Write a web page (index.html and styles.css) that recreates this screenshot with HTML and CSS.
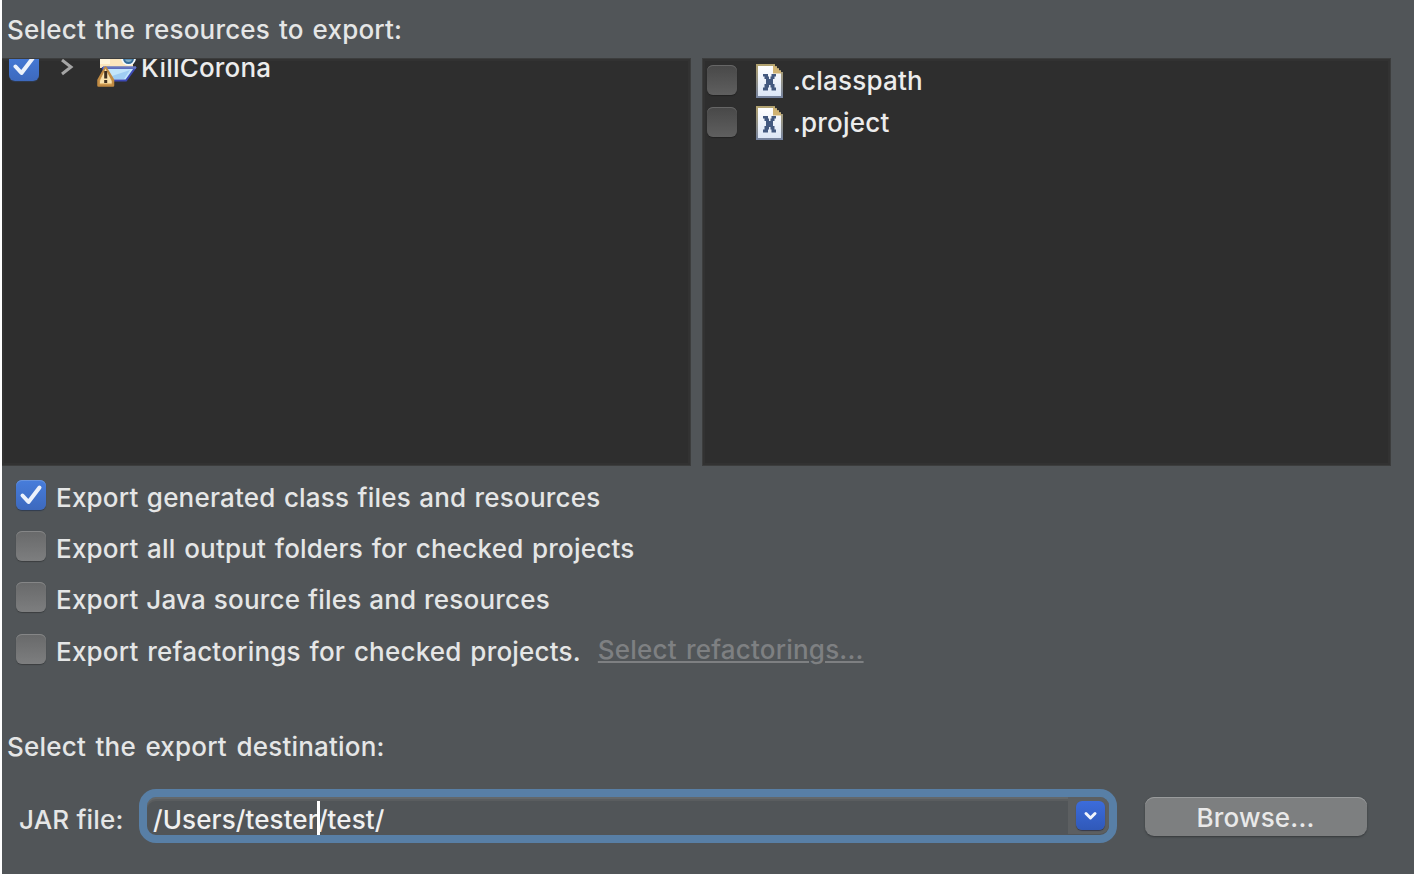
FILE: index.html
```html
<!DOCTYPE html>
<html lang="en">
<head>
<meta charset="utf-8">
<title>JAR Export</title>
<link rel="stylesheet" href="styles.css">
</head>
<body>
<main class="dialog">
  <h1 class="heading"><span class="t-resources">Select the resources to export:</span></h1>
  <section class="panes">
    <div class="pane tree">
      <div class="row tree-row">
        <span class="box checked tree-box"><svg viewBox="0 0 30 30"><path d="M6.5 15.5 12.5 22 23.5 7.5"/></svg></span>
        <svg class="arrow" viewBox="0 0 14 18"><path d="M2 2 11 9 2 16"/></svg>
        <svg class="project" viewBox="0 0 42 42">
          <path d="M4 8H37V21H4z" fill="#fbe6bd"/>
          <path d="M4 8H14V17H4z" fill="#fff4db"/>
          <circle cx="32.5" cy="11" r="7.5" fill="#f4fafc"/>
          <path d="M28 11.500A4.500 4.500 0 0 0 37 11.500z" fill="#7fa9c2" stroke="#326c99" stroke-width="2"/>
          <path d="M7 21H39L30 33.500H10z" fill="#c2e5fb" stroke="#3c49b5" stroke-width="2"/>
          <path d="M16 29 34 23 28 32H16z" fill="#9fcdf3"/>
          <path d="M7 20.500H40" stroke="#6677bf" stroke-width="2.5"/>
          <path d="M9.500 20.500 2.500 33V38.500H17V33z" fill="#eac37f" stroke="#c18b43" stroke-width="2.500" stroke-linejoin="round"/>
          <path d="M9.500 21.500 4 34.500V36H15.500V34.500z" fill="#fae3ae"/>
          <path d="M8.200 24H11.200V31.500H8.200zM8.200 33H11.200V36H8.200z" fill="#3e2f20"/>
        </svg>
        <span class="t-kill">KillCorona</span>
      </div>
    </div>
    <div class="pane files">
      <div class="row">
        <span class="box dark"></span>
        <svg class="file" viewBox="0 0 27 34"><use href="#xml-file"/></svg>
        <span class="t-classpath">.classpath</span>
      </div>
      <div class="row">
        <span class="box dark"></span>
        <svg class="file" viewBox="0 0 27 34"><use href="#xml-file"/></svg>
        <span class="t-project">.project</span>
      </div>
    </div>
  </section>
  <section class="options">
    <label class="option"><span class="box checked"><svg viewBox="0 0 30 30"><path d="M6.5 15.5 12.5 22 23.5 7.5"/></svg></span><span class="option-text t-gen">Export generated class files and resources</span></label>
    <label class="option"><span class="box"></span><span class="option-text t-all">Export all output folders for checked projects</span></label>
    <label class="option"><span class="box"></span><span class="option-text t-java">Export Java source files and resources</span></label>
    <label class="option"><span class="box"></span><span class="option-text t-ref">Export refactorings for checked projects.</span><a class="link">Select refactorings...</a></label>
  </section>
  <h2 class="destination"><span class="t-dest">Select the export destination:</span></h2>
  <section class="jar">
    <span class="jar-label">JAR file:</span>
    <div class="combo">
      <div class="combo-text"><span>/Users/tester</span><i class="caret"></i><span>/test/</span></div>
      <div class="combo-end"><span class="drop"><svg viewBox="0 0 29 29"><path d="M10 12.5 14.5 17 19 12.5"/></svg></span></div>
    </div>
    <button class="browse">Browse...</button>
  </section>
</main>
<svg class="defs" width="0" height="0">
  <defs>
    <linearGradient id="edge" x1="0" y1="0" x2="0" y2="1"><stop offset="0" stop-color="#b3a36f"/><stop offset="1" stop-color="#74829f"/></linearGradient>
    <linearGradient id="paper" x1="0" y1="0" x2="0" y2="1"><stop offset="0" stop-color="#fff"/><stop offset="1" stop-color="#dce6f6"/></linearGradient>
    <symbol id="xml-file" viewBox="0 0 27 34">
      <path d="M0 0H19V2H21V4H23V6H25V8H27V34H0z" fill="url(#edge)"/>
      <path d="M2 2H18V9H25V32H2z" fill="url(#paper)"/>
      <path d="M17 1.5H19V3H21V5H23V7H25V9.5H17z" fill="#d0b373"/>
      <path d="M7 10H12V12.5H13V15H14.500V12.5H15.500V10H20V12.5H18.5V15H17V20H18.5V23.5H20V26.5H15.500V23.5H14.500V21H13V23.5H12V26.5H7V23.5H8.5V20H10V15H8.5V12.5H7z" fill="#43597f"/>
    </symbol>
  </defs>
</svg>
</body>
</html>
```
FILE: styles.css
```css
* { box-sizing: border-box; }
body {
  margin: 0;
  width: 1414px;
  height: 874px;
  overflow: hidden;
  background: #fff;
  font: 500 26px/32px Inter, "Liberation Sans", sans-serif;
  letter-spacing: 0.2px;
  color: #e5e6e6;
  white-space: nowrap;
}
.dialog {
  height: 874px;
  margin-left: 2px;
  background: #515558;
  display: flex;
  flex-direction: column;
}
.heading, .destination { margin: 0; padding-left: 5px; font: inherit; }
.heading { height: 58px; padding-top: 14px; }
.t-resources { word-spacing: 1.8px; }
.t-gen { word-spacing: 1.2px; }
.t-all { word-spacing: 1.5px; }
.t-java { word-spacing: 0.7px; }
.t-ref { word-spacing: 1.7px; }
.t-dest { word-spacing: 2.4px; }
.panes { display: grid; grid-template-columns: 689px 689px; gap: 12px; height: 408px; }
.pane { background: #2e2e2e; border: 1px solid #3c3d3d; box-shadow: inset 0 0 0 2px #323232; overflow: hidden; }
.tree { border-left: 0; }
.files { padding: 0 0 0 4px; margin-left: -1px; width: 689px; }
.row { display: flex; align-items: center; height: 42px; color: #ececec; }
.files .row > span:last-child { margin-top: 1px; }
.tree-row { margin-top: -14px; padding-left: 7px; }
.tree-row > .t-kill { margin-top: 4px; }
.box {
  flex: none;
  width: 30px;
  height: 30px;
  border-radius: 6px;
  background: linear-gradient(#68696a, #7d7e7f);
  box-shadow: inset 0 1px 0 #858687, 0 1px 1px #3b3e40;
}
.box.dark { background: linear-gradient(#484848, #5f5f5f); box-shadow: inset 0 1px 0 #666, 0 1px 1px #222; }
.box.checked { background: linear-gradient(#477ddb, #3d69be); box-shadow: inset 0 1px 0 #6792dc, 0 1px 1px #303c50; }
.box svg { display: block; width: 30px; height: 30px; }
.box path { fill: none; stroke: #edf2fb; stroke-width: 4; stroke-linecap: round; stroke-linejoin: round; }
.arrow { width: 14px; height: 18px; margin: 2px 0 0 21px; }
.arrow path { fill: none; stroke: #a5a5a5; stroke-width: 3; }
.project { width: 42px; height: 42px; margin: 4px 3px 0 22px; flex: none; }
.file { width: 27px; height: 34px; margin: 1px 10px 0 19px; }
.options { padding: 3px 0 0 14px; height: 265px; }
.option { display: flex; align-items: center; height: 51.4px; }
.option-text { margin: 6px 0 0 10px; }
.link { margin: 2px 0 0 17px; color: #7e8082; text-decoration: underline; text-decoration-thickness: 2px; text-underline-offset: 2px; word-spacing: 2px; }
.jar { display: flex; align-items: flex-start; padding: 26px 0 0 17px; }
.jar-label { width: 120px; padding-top: 15px; }
.combo {
  width: 978px;
  height: 54px;
  border: 8px solid #587fa6;
  border-radius: 17px;
  display: flex;
  background: #515558;
  box-shadow: inset 0 2px 0 #64686a, inset 0 4px 0 #5a5d5f;
}
.combo-text { flex: 1; display: flex; align-items: center; padding: 7px 0 0 6px; color: #f0f0f0; letter-spacing: 0.1px; }
.caret { width: 3px; height: 34px; margin: -3px -2px 0 -1px; background: #fff; z-index: 1; }
.combo-end { width: 41px; height: 37px; padding: 4px 0 0 8px; background: #5c5f61; border-radius: 0 9px 9px 0; }
.drop { display: block; width: 29px; height: 29px; border-radius: 6px; background: linear-gradient(#3c6cdb, #3059b9); box-shadow: 0 1px 1px #35394a; }
.drop svg { display: block; width: 29px; height: 29px; }
.drop path { fill: none; stroke: #f1f4fc; stroke-width: 3; stroke-linecap: round; stroke-linejoin: round; }
.browse {
  width: 222px;
  height: 39px;
  margin: 8px 0 0 28px;
  padding: 2px 1px 0 0;
  border: 0;
  border-radius: 9px;
  background: #7d7f80;
  box-shadow: inset 0 1px 0 #999b9c, 0 1px 2px #36393b;
  color: #e9e9e9;
  font: inherit;
  letter-spacing: 0.2px;
}
.defs { position: absolute; }
```
